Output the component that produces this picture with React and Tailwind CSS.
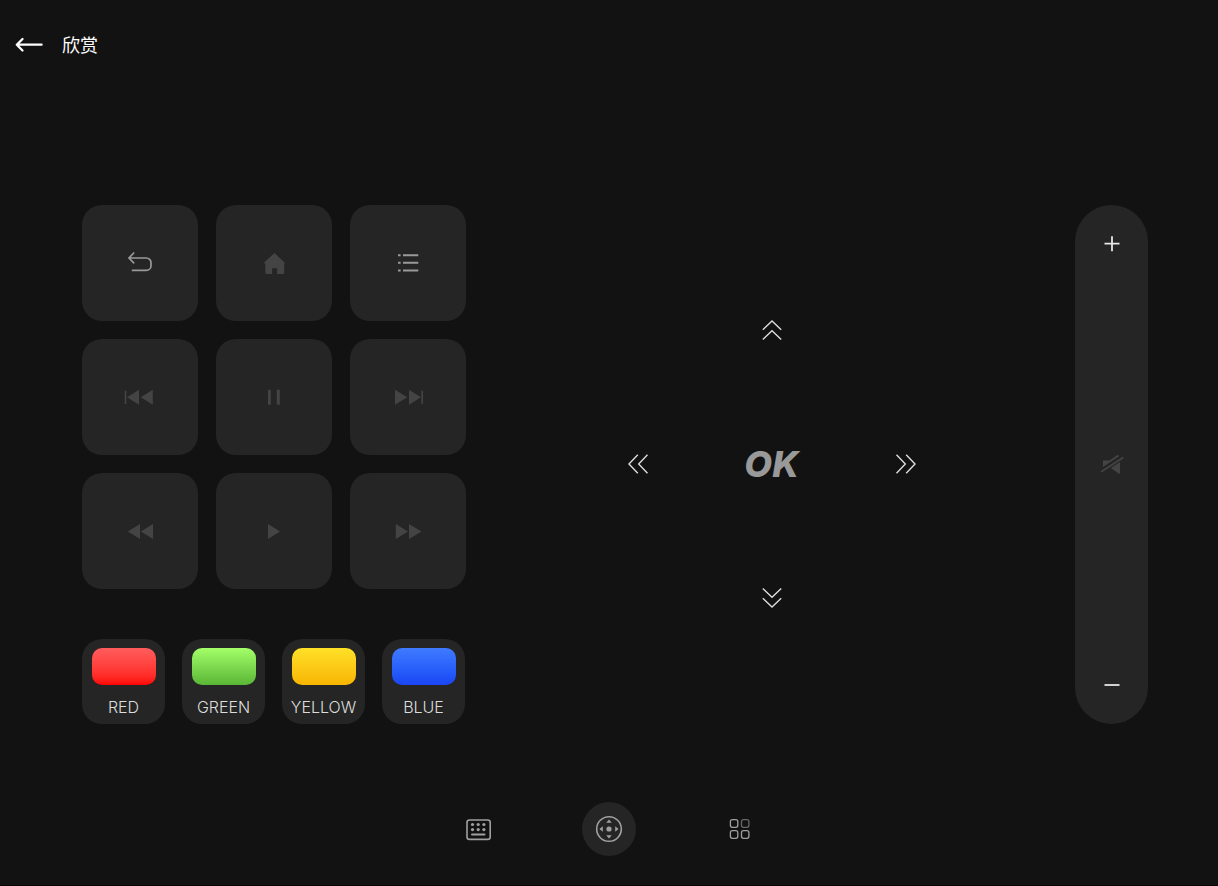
import React from "react";

const KEYS = [
  { id: "back", label: "Back" },
  { id: "home", label: "Home", dim: true },
  { id: "menu", label: "Menu" },
  { id: "prev", label: "Previous", dim: true },
  { id: "pause", label: "Pause", dim: true },
  { id: "next", label: "Next", dim: true },
  { id: "rewind", label: "Rewind", dim: true },
  { id: "play", label: "Play", dim: true },
  { id: "forward", label: "Fast forward", dim: true },
];

const COLORS = [
  { title: "RED", swatch: "from-[#ff5c5c] to-[#ff0000]" },
  { title: "GREEN", swatch: "from-[#a4ff69] to-[#5ab636]" },
  { title: "YELLOW", swatch: "from-[#ffe126] to-[#f7b500]" },
  { title: "BLUE", swatch: "from-[#3f7bff] to-[#1b45f5]" },
];

const KEY_SHAPES = {
  back: (
    <path
      d="M9.7 6 5 11l4.7 4.8M5 11H22.3a4.7 4.7 0 0 1 4.7 4.7v3A4.7 4.7 0 0 1 22.3 23.4H8.5"
      fill="none"
      stroke="currentColor"
      strokeWidth="1.7"
      strokeLinecap="round"
    />
  ),
  home: (
    <path d="M16.4 6 26.6 15.4Q27.2 16.3 26.2 16.4V25.6Q26.2 27 24.8 27H19.1V21.2H14.1V27H8.8Q7.3 27 7.3 25.6V16.4H6.8Q5.6 16.2 6.4 15.3Z" />
  ),
  menu: (
    <path d="M6 7.2h2.6v2H6zM11 7.2h15.3v2H11zM6 14.8h2.6v2H6zM11 14.8h15.3v2H11zM6 22.4h2.6v2H6zM11 22.4h15.3v2H11z" />
  ),
  prev: <path d="M.7 9.7h1.6v13.2H.7zM15 8.7v15L3 16.2zM28.8 8.7v15l-12-7.5z" />,
  pause: <path d="M10 8.8h2.8v15H10zM18.8 8.8h3v15h-3z" />,
  next: <path d="M3 8.7v15l12.3-7.5zM17 8.7v15l12-7.5zM29.4 9.7H31v13.2h-1.6z" />,
  rewind: <path d="M16 9v15L3.8 16.5zM29 9v15l-12.2-7.5z" />,
  play: <path d="M10 9v15l12-7.5z" />,
  forward: <path d="M3.8 9v15L16 16.5zM17 9v15l12.5-7.5z" />,
};

function DoubleChevron({ className = "" }) {
  return (
    <svg
      viewBox="0 0 24 24"
      className={`size-6 ${className}`}
      fill="none"
      stroke="currentColor"
      strokeWidth="1.4"
    >
      <path d="M2.8 11.8 12 3l9.2 8.8M2.8 21.5 12 12.7l9.2 8.8" />
    </svg>
  );
}

function DirButton({ label, place, turn = "" }) {
  return (
    <button
      aria-label={label}
      className={`${place} grid place-items-center text-[#dcdcdc]`}
    >
      <DoubleChevron className={turn} />
    </button>
  );
}

function NavButton({ label, active, children }) {
  return (
    <button
      aria-label={label}
      className={`grid size-[54px] place-items-center rounded-full text-[#a0a0a0] ${
        active ? "bg-[#252525]" : ""
      }`}
    >
      <svg viewBox="0 0 28 28" className="size-7" fill="currentColor">
        {children}
      </svg>
    </button>
  );
}

export default function App() {
  return (
    <div className="flex min-h-screen flex-col border-b border-[#0a0307] bg-[#121212] font-['Inter','Noto_Sans_CJK_SC',sans-serif] text-white">
      <header className="flex h-[90px] items-center gap-[18px] pl-[14px]">
        <button aria-label="Return">
          <svg
            viewBox="0 0 30 20"
            className="h-5 w-[30px]"
            fill="none"
            stroke="currentColor"
            strokeWidth="2.3"
            strokeLinecap="round"
            strokeLinejoin="round"
          >
            <path d="M8.5 4 2.8 9.7l5.7 5.8M2.8 9.7H27.6" />
          </svg>
        </button>
        <h1 className="pb-0.5 font-['Noto_Sans_CJK_SC',sans-serif] text-[18px]">
          欣赏
        </h1>
      </header>

      <main className="flex pt-[115px] pr-[70px] pl-[82px]">
        <section className="flex w-[384px] flex-col gap-[50px]">
          <div className="grid grid-cols-3 gap-[18px]">
            {KEYS.map((key) => (
              <button
                key={key.id}
                aria-label={key.label}
                className={`grid aspect-square place-items-center rounded-[20px] bg-[#252525] ${
                  key.dim ? "text-[#444444]" : "text-[#999999]"
                }`}
              >
                <svg viewBox="0 0 32 32" className="size-8" fill="currentColor">
                  {KEY_SHAPES[key.id]}
                </svg>
              </button>
            ))}
          </div>

          <div className="flex gap-[17px]">
            {COLORS.map((color) => (
              <button
                key={color.title}
                className="flex h-[85px] w-[83px] flex-col items-center gap-3 rounded-[20px] bg-[#252525] pt-[9px] font-['Inter',sans-serif] text-[16px] leading-5 font-light text-[#dddddd]"
              >
                <span
                  className={`h-[37px] w-16 rounded-[10px] bg-linear-to-b ${color.swatch}`}
                />
                {color.title}
              </button>
            ))}
          </div>
        </section>

        <section className="flex flex-1 items-center justify-center pb-0.5 pl-0.5">
          <div className="grid size-[402px] grid-cols-3 grid-rows-3">
            <DirButton label="Up" place="col-start-2 row-start-1" />
            <DirButton label="Left" place="col-start-1 row-start-2" turn="-rotate-90" />
            <button className="col-start-2 row-start-2 font-['Inter',sans-serif] text-[36px] leading-none font-extrabold text-[#999999] italic">
              OK
            </button>
            <DirButton label="Right" place="col-start-3 row-start-2" turn="rotate-90" />
            <DirButton label="Down" place="col-start-2 row-start-3" turn="rotate-180" />
          </div>
        </section>

        {/* Volume */}
        <section className="flex w-[73px] flex-col items-center justify-between rounded-full bg-[#252525] py-[27px] text-[#e6e6e6]">
          <button aria-label="Volume up">
            <svg viewBox="0 0 24 24" className="size-6" stroke="currentColor" strokeWidth="1.8">
              <path d="M4.5 11.7h15M12 4.2v15" />
            </svg>
          </button>
          <button aria-label="Mute" className="text-[#444444]">
            <svg viewBox="0 0 24 24" className="size-6" fill="currentColor">
              <path d="M3 7.4H9.5L17 2.2Q18.5 1.4 19 3.2L3 14Z" />
              <path d="M10.8 14.9 20 9V20.8L18.5 20.4Z" />
              <path d="M1.2 18.8 23.2 4.4" stroke="currentColor" strokeWidth="1.8" />
              <path d="M1 17 20.5 4.2" stroke="#252525" strokeWidth="1" />
            </svg>
          </button>
          <button aria-label="Volume down">
            <svg viewBox="0 0 24 24" className="size-6" stroke="currentColor" strokeWidth="1.8">
              <path d="M4.5 12h15" />
            </svg>
          </button>
        </section>
      </main>

      <nav className="flex justify-center gap-[76px] pt-[78px] pb-7">
        <NavButton label="Keyboard">
          <rect x="2" y="5" width="23.2" height="19.4" rx="2.5" fill="none" stroke="currentColor" strokeWidth="1.6" />
          <circle cx="7.5" cy="9.5" r="1.6" />
          <circle cx="13.2" cy="9.5" r="1.6" />
          <circle cx="18.9" cy="9.5" r="1.6" />
          <circle cx="7.5" cy="14.6" r="1.6" />
          <circle cx="13.2" cy="14.6" r="1.6" />
          <circle cx="18.9" cy="14.6" r="1.6" />
          <path d="M7 19.5h12.5" stroke="currentColor" strokeWidth="2" strokeLinecap="round" />
        </NavButton>
        <NavButton label="Direction pad" active>
          <circle cx="14" cy="14" r="12.3" fill="none" stroke="currentColor" strokeWidth="1.6" />
          <circle cx="14" cy="14" r="2.6" />
          <path d="M14 4.4 16.8 7.8H11.2ZM14 23.6 16.8 20.2H11.2ZM4.4 14 7.8 11.2V16.8ZM23.6 14 20.2 11.2V16.8Z" />
        </NavButton>
        <NavButton label="Apps">
          <g fill="none" stroke="currentColor" strokeWidth="1.3">
            <rect x="5.4" y="4.7" width="7.4" height="7.6" rx="2" />
            <rect x="16.5" y="4.7" width="7.4" height="7.6" rx="2" opacity="0.6" />
            <rect x="5.4" y="15.7" width="7.4" height="7.6" rx="2" />
            <rect x="16.5" y="15.7" width="7.4" height="7.6" rx="2" />
          </g>
        </NavButton>
      </nav>
    </div>
  );
}
